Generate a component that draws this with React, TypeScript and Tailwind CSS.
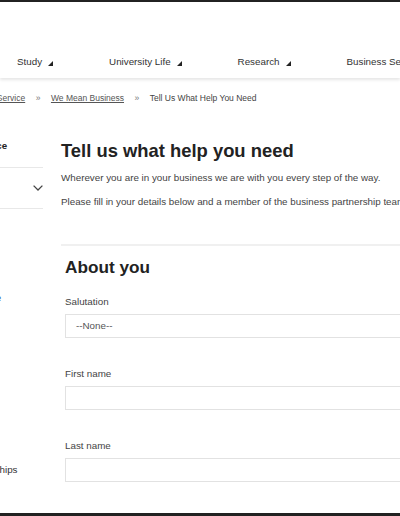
import React from 'react';

const navItems = ['Study', 'University Life', 'Research', 'Business Services'];

const sideLinks = [
  { label: 'Access Expertise', active: true },
  { label: 'Funding' },
  { label: 'Case Studies' },
  { label: 'Events' },
  { label: 'Graduate Internships' },
  { label: 'Contact Us' },
];

const Caret = () => (
  <svg width="5" height="5" viewBox="0 0 5 5" className="ml-[6px] mt-[2px]">
    <polygon points="5,0 5,5 0,5" fill="#222" />
  </svg>
);

const Chevron = () => (
  <svg width="10" height="6" viewBox="0 0 10 6" className="shrink-0">
    <polyline points="0.6,0.6 5,5 9.4,0.6" fill="none" stroke="#444" strokeWidth="1.3" />
  </svg>
);

const Field: React.FC<{ label: string; gap: string; select?: boolean }> = ({ label, gap, select }) => (
  <div className={gap}>
    <div className="text-[9.8px] leading-[14px] text-[#444]">{label}</div>
    <div className="mt-[5px] h-[24px] w-full border border-[#e2e2e2] bg-white flex items-center pl-[10px] text-[9.8px] text-[#555]">
      {select ? '--None--' : null}
    </div>
  </div>
);

export default function App() {
  return (
    <div className="w-[400px] h-[516px] overflow-hidden bg-white flex flex-col font-['Liberation_Sans',Arial,sans-serif] text-[#333]">
      <div className="h-[2px] shrink-0 bg-[#222]" />

      {/* header + main nav */}
      <header className="h-[76px] shrink-0 flex items-end bg-white shadow-[0_2px_3px_rgba(0,0,0,0.10)] relative z-10">
        <nav className="h-[32px] flex items-center gap-[56px] pl-[17px] whitespace-nowrap text-[9.8px] text-[#333]">
          {navItems.map(item => (
            <div key={item} className="flex items-center">
              <span>{item}</span>
              <Caret />
            </div>
          ))}
        </nav>
      </header>

      {/* breadcrumb */}
      <div className="shrink-0 overflow-hidden pt-[14px]">
        <div className="flex items-center h-[12px] -ml-[40px] whitespace-nowrap text-[8.5px] leading-[12px] text-[#555]">
          <a className="underline underline-offset-1">Business Service</a>
          <span className="mx-[10.5px] text-[#777]">»</span>
          <a className="underline underline-offset-1">We Mean Business</a>
          <span className="mx-[10.5px] text-[#777]">»</span>
          <span className="text-[#444]">Tell Us What Help You Need</span>
        </div>
      </div>

      <div className="flex flex-1 min-h-0 mt-[32px] overflow-hidden">
        {/* side menu, mostly scrolled off the left edge */}
        <aside className="w-[43px] shrink-0 overflow-hidden">
          <div className="w-[125px] -ml-[82px]">
            <div className="pl-[8px] mt-[3px] pb-[14px] border-b border-[#e8e8e8] text-[9.8px] leading-[14px] font-bold text-[#222] whitespace-nowrap">
              Business Service
            </div>
            <div className="h-[41px] pl-[10px] flex items-center justify-between border-b border-[#e8e8e8] text-[9.8px]">
              <span>Menu</span>
              <Chevron />
            </div>
            <ul className="mt-[68px]">
              {sideLinks.map(l => (
                <li
                  key={l.label}
                  className={`h-[43px] pl-[8px] flex items-center whitespace-nowrap text-[9.8px] ${l.active ? 'text-[#2a64b4]' : 'text-[#333]'}`}
                >
                  {l.label}
                </li>
              ))}
            </ul>
          </div>
        </aside>

        {/* main form */}
        <main className="ml-[18px] w-[600px] shrink-0">
          <h1 className="mt-[4px] text-[18.4px] leading-[22px] font-bold text-[#222]">Tell us what help you need</h1>
          <p className="mt-[9px] text-[9.8px] leading-[14px] text-[#444] whitespace-nowrap">
            Wherever you are in your business we are with you every step of the way.
          </p>
          <p className="mt-[10px] text-[9.8px] leading-[14px] text-[#444] whitespace-nowrap">
            Please fill in your details below and a member of the business partnership team will be in touch.
          </p>
          <div className="mt-[35px] h-[2px] bg-[#f0f0f0]" />

          <section className="pl-[4px]">
            <h2 className="mt-[10px] text-[17.2px] leading-[22px] font-bold text-[#222]">About you</h2>
            <Field label="Salutation" gap="mt-[17px]" select />
            <Field label="First name" gap="mt-[29px]" />
            <Field label="Last name" gap="mt-[29px]" />
            <Field label="Job title" gap="mt-[29px]" />
          </section>
        </main>
      </div>

      <div className="h-[3px] shrink-0 bg-[#222]" />
    </div>
  );
}
